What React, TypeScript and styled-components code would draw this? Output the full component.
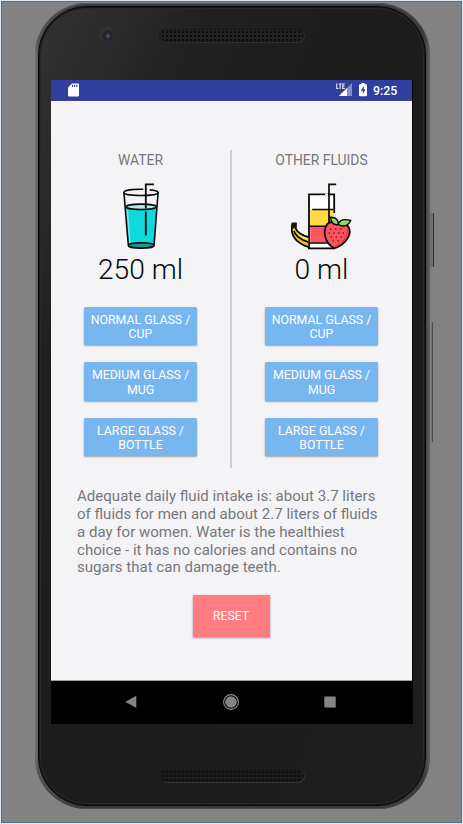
import React from "react";
import styled, { createGlobalStyle } from "styled-components";

const GlobalStyle = createGlobalStyle`
  * { box-sizing: border-box; }
  body {
    margin: 0;
    background: #dfeaf5;
    font-family: Roboto, "Liberation Sans", sans-serif;
    -webkit-font-smoothing: antialiased;
  }
`;

const Desktop = styled.div`
  width: 463px;
  height: 824px;
  padding: 1px;
  background: #dbe8f3;
  overflow: hidden;
`;

const EmulatorWindow = styled.div`
  height: 822px;
  border: 1px solid #54718c;
  background: #828282;
  padding: 1px 0 0 33px;
`;

const PhoneRim = styled.div`
  position: relative;
  width: 395px;
  height: 806px;
  padding: 3px 4px 3px 3px;
  border-radius: 52px;
  background: linear-gradient(90deg, #7b7b7b 0, #555 3px, #3c3a3b 40px, #3b393a 388px, #454243 391px, #676465 395px);
  box-shadow: inset 0 1px 1px #5b5b5b, inset 0 -1px 1px #4a4748;
`;

const PhoneBody = styled.div`
  height: 800px;
  border: 1px solid #080808;
  box-shadow: inset 0 0 0 1px #181818, inset 0 0 0 2px #292929;
  border-radius: 49px;
  background: linear-gradient(115deg, #333 0, #2b2b2b 11%, #202020 23%, #1c1c1d 45%, #1e1e1f 100%);
  display: flex;
  flex-direction: column;
  align-items: flex-start;
  padding-left: 12px;
`;

const SideKey = styled.div<{ $top: number; $height: number; $power?: boolean }>`
  position: absolute;
  left: ${(p) => (p.$power ? 395 : 396)}px;
  top: ${(p) => p.$top}px;
  width: ${(p) => (p.$power ? 4 : 2)}px;
  height: ${(p) => p.$height}px;
  background: ${(p) => (p.$power ? "linear-gradient(90deg,#726d70 3px,#373536 3px)" : "linear-gradient(90deg,#757575 1px,#4c4a4b 1px)")};
`;

const TopBezel = styled.div`
  height: 73px;
  flex: none;
  display: flex;
  padding: 22px 0 0 49px;
`;

const Camera = styled.div`
  width: 15px;
  height: 15px;
  margin: -2px 1px 0 -1px;
  border-radius: 50%;
  background: radial-gradient(circle at 9px 9px, #94859a 0, #493b4c 1.2px, #211d26 4px, #292929 5px, #333 7px);
`;

const Speaker = styled.div<{ $bottom?: boolean }>`
  width: 145px;
  height: 13px;
  flex: none;
  margin: ${(p) => (p.$bottom ? "45px 0 0 108px" : "0 0 0 44px")};
  border-radius: 7px;
  background-color: ${(p) => (p.$bottom ? "#1c1c1c" : "#222")};
  background-image: radial-gradient(circle, #0d0d0d 0.8px, transparent 1.3px);
  background-size: 4px 4px;
  background-position: 1px 0;
  border: 1px solid #191919;
  box-shadow: 1px 1px 0 ${(p) => (p.$bottom ? "#333" : "#2d2d2d")};
`;

const Screen = styled.div`
  width: 362px;
  height: 644px;
  flex: none;
  background: #000;
`;

const StatusBar = styled.header`
  width: 361px;
  height: 21px;
  background: #303f9f;
  border-bottom: 1px solid #3b488e;
  display: flex;
  align-items: center;
  padding: 0 14px 0 17px;
  color: #fff;
`;

const StatusIcons = styled.div`
  margin-left: auto;
  display: flex;
  align-items: center;
  gap: 7px;
`;

const Clock = styled.span`
  margin-left: -1px;
  width: 25px;
  padding-top: 2px;
  font-size: 12.3px;
  line-height: 18px;
  font-weight: 500;
  letter-spacing: 0.05px;
`;

const AppPage = styled.main`
  width: 361px;
  height: 580px;
  background: #f4f4f7;
  border-bottom: 1px solid #9aa4a6;
  padding-top: 49px;
  display: flex;
  flex-direction: column;
`;

const Columns = styled.section`
  display: grid;
  grid-template-columns: 179px 2px 179px;
  height: 318px;
`;

const Divider = styled.div`
  background: #cfcfd1;
`;

const FluidColumn = styled.div`
  display: flex;
  flex-direction: column;
  align-items: center;
`;

const FluidTitle = styled.h2`
  margin: 0;
  height: 32px;
  font-size: 13.9px;
  font-weight: 400;
  line-height: 20px;
  color: #77777a;
  white-space: nowrap;
`;

const Amount = styled.div`
  height: 40px;
  margin-top: 1px;
  font-size: 28.2px;
  font-weight: 300;
  line-height: 38px;
  color: #080808;
  white-space: nowrap;
`;

const ServingList = styled.div`
  display: grid;
  gap: 17px;
  margin-top: 16px;
`;

const ServingButton = styled.button`
  width: 113px;
  height: 38.4px;
  padding: 2px 0 0;
  border: 0;
  border-radius: 1.5px;
  background: #77b6ef;
  box-shadow: 0 1px 2px rgba(0, 0, 0, 0.35);
  color: #fff;
  font: 400 12.35px/14.3px Roboto, sans-serif;
  white-space: pre-line;
`;

const Advice = styled.p`
  margin: 20px 0 0 26px;
  color: #77777a;
  font-size: 15.05px;
  line-height: 17.85px;
  white-space: pre;
`;

const ResetButton = styled.button`
  width: 77px;
  height: 42px;
  margin: 17.5px 0 0 141.5px;
  padding: 1px 0 0;
  border: 0;
  background: #ff7d80;
  box-shadow: 0 1px 2px rgba(0, 0, 0, 0.38);
  color: #fff;
  font: 400 12.3px/16px Roboto, sans-serif;
`;

const NavBar = styled.nav`
  height: 43px;
  display: grid;
  grid-template-columns: 14px 18px 12px;
  align-items: center;
  padding: 0 0 2px 73px;
  column-gap: 84px;
`;

const SdCardIcon = () => (
  <svg width="11" height="14" viewBox="0 0 11 14">
    <path d="M4 .5h6q1 0 1 1v11q0 1-1 1H1q-1 0-1-1V4.5z" fill="#fff" />
    <path d="M4.6 1.8v2.2M6.7 1.8v2.2M8.8 1.8v2.2" stroke="#303f9f" strokeWidth="1.1" />
  </svg>
);

const SignalIcon = () => (
  <svg width="16" height="14" viewBox="0 0 16 14">
    <path d="M16 0v13H3z" fill="#8690c7" />
    <path d="M11 5v8H3z" fill="#fff" />
    <path d="M0 0h9.5v6.5H0z" fill="#303f9f" />
    <path d="M.7 .5v5h1.8M2.7 1h3M4.2 1v5M8.8 1H6.8v4.5h2M6.8 3.2h1.8" fill="none" stroke="#e8eafa" strokeWidth="1.1" />
  </svg>
);

const BatteryIcon = () => (
  <svg width="8" height="14" viewBox="0 0 8 14">
    <path d="M2.3 0h3.4v1.3H7q1 0 1 1v10q0 1-1 1H1q-1 0-1-1v-10q0-1 1-1h1.3z" fill="#fff" />
    <path d="M4.8 3L1.8 7.7h2v3.3l2.7-4.7H4.8z" fill="#303f9f" />
  </svg>
);

const WaterIcon = () => (
  <svg width="62" height="68" viewBox="0 0 62 68" fill="none" stroke="#080808" strokeWidth="1.6">
    <path d="M16.1 25.5l2.6 38q12.2 4.4 25.2 0l2.5-38q-15 4-30.3 0z" fill="#10d9dc" stroke="none" />
    <path d="M17.3 28l2.5 33.5" stroke="#74edeb" strokeWidth="1.5" />
    <ellipse cx="31.2" cy="24.8" rx="15" ry="2.7" fill="#a9eee7" />
    <ellipse cx="31.2" cy="63.4" rx="13" ry="2.7" fill="#15979d" />
    <path d="M18.3 62.8l-4.4-52.5M44.1 62.8l4-52.5" />
    <path d="M33.3 7.3C22 7 14 8.2 13.9 10.4c.1 4.1 34.2 4.1 34.2 0 0-1.4-3.2-2.1-8.4-2.5" />
    <path d="M44 2.4h-8.2v24M35.8 29.5v24" strokeWidth="1.8" />
  </svg>
);

const JuiceIcon = () => (
  <svg width="62" height="68" viewBox="0 0 62 68" fill="none" stroke="#080808" strokeWidth="1.8">
    <g transform="translate(-.8 0)">
      <path d="M18.8 12.4H44v54H18.8z" fill="#fff" />
      <path d="M20 27.5h23v16.7H20z" fill="#ffda42" stroke="none" />
      <path d="M20 44.7h23v15.8H20z" fill="#ff535e" stroke="none" />
      <path d="M22 27.5h21M19 44.3h20M19 61h20" strokeWidth="1.5" />
      <path d="M34.8 12.4h3M44 31v6" stroke="#f4f4f7" strokeWidth="2" />
      <path d="M46 2.4h-7.2V43" strokeWidth="1.7" />
      <path d="M2 41.5h3.6v5.2c1.7 4.1 5.2 7.2 12.3 9.5v9C8.8 62.1 2 57.2 1.5 47.5z" fill="#f1bd20" stroke="none" />
      <path d="M6 48l12 7.2v4C12.6 58.3 7.4 54 4 49z" fill="#ffdc4e" stroke="none" />
      <path d="M2 41.5h3.6v5.2c1.7 4 5.5 6.5 12.5 8.5M18 60C9.5 57.5 4.5 52.5 3.8 49M2 41.5l-.5 6C2 57.2 8.8 62 18.7 65.2" />
      <path d="M1.5 41h4.7v4L1.5 47z" fill="#151515" stroke="none" />
      <path d="M37 42c-5.7 9.2-1.1 20.1 7.2 24.2C52 64.5 61.5 55.2 59.2 46.9c-1.6-5.6-8.7-6.2-11.3-4.8-2.2-1.8-7.6-3.5-10.9-.1z" fill="#ff535e" />
      <path d="M57.4 47c.6 7-4.3 14.2-12.2 17.3" stroke="#d83848" strokeWidth="1.4" />
      <path d="M40.5 47h.1M45.5 47h.1M50.5 47h.1M39 51h.1M43.8 51h.1M48.6 51h.1M53 51h.1M41 55h.1M46 55h.1M51 55h.1M43 59h.1M48 59h.1" stroke="#431316" strokeWidth="1.5" strokeLinecap="round" />
      <path d="M48 42.5c-5.6 1.2-7.5-3.5-7.6-7.3 5.7.1 8.1 3.1 7.6 7.3zm0 0c1.6-5.4 7.2-5.5 12.5-4-1.6 4-5.8 7.5-12.5 4z" fill="#8bdd63" strokeWidth="1.4" />
    </g>
  </svg>
);

const BackIcon = () => (
  <svg width="14" height="16" viewBox="0 0 14 16">
    <path d="M2 7.5L11.8 2.1q.5-.2.5.4V13.2q0 .5-.5.3L2 8.3q-.5-.4 0-.8z" fill="#858585" />
  </svg>
);

const HomeIcon = () => (
  <svg width="18" height="18" viewBox="0 0 18 18">
    <circle cx="9" cy="9" r="7.4" fill="none" stroke="#909090" strokeWidth="1.1" />
    <circle cx="9" cy="9" r="5.8" fill="#858585" />
  </svg>
);

const OverviewIcon = () => (
  <svg width="12" height="12" viewBox="0 0 12 12">
    <rect x=".3" y=".4" width="11.4" height="11.2" rx=".5" fill="#858585" />
  </svg>
);

const servings = ["NORMAL GLASS /\nCUP", "MEDIUM GLASS /\nMUG", "LARGE GLASS /\nBOTTLE"];

const adviceText = `Adequate daily fluid intake is: about 3.7 liters
of fluids for men and about 2.7 liters of fluids
a day for women. Water is the healthiest
choice - it has no calories and contains no
sugars that can damage teeth.`;

function Fluid({ title, amount, children }: { title: string; amount: string; children: React.ReactNode }) {
  return (
    <FluidColumn>
      <FluidTitle>{title}</FluidTitle>
      {children}
      <Amount>{amount}</Amount>
      <ServingList>
        {servings.map((serving) => <ServingButton key={serving}>{serving}</ServingButton>)}
      </ServingList>
    </FluidColumn>
  );
}

export default function App() {
  return (
    <Desktop>
      <GlobalStyle />
      <EmulatorWindow>
        <PhoneRim>
          <PhoneBody>
            <TopBezel>
              <Camera />
              <Speaker />
            </TopBezel>
            <Screen>
              <StatusBar>
                <SdCardIcon />
                <StatusIcons>
                  <SignalIcon />
                  <BatteryIcon />
                  <Clock>9:25</Clock>
                </StatusIcons>
              </StatusBar>
              <AppPage>
                <Columns>
                  <Fluid title="WATER" amount="250 ml"><WaterIcon /></Fluid>
                  <Divider />
                  <Fluid title="OTHER FLUIDS" amount="0 ml"><JuiceIcon /></Fluid>
                </Columns>
                <Advice>{adviceText}</Advice>
                <ResetButton>RESET</ResetButton>
              </AppPage>
              <NavBar>
                <BackIcon />
                <HomeIcon />
                <OverviewIcon />
              </NavBar>
            </Screen>
            <Speaker $bottom />
          </PhoneBody>
          <SideKey $power $top={210} $height={54} />
          <SideKey $top={319} $height={120} />
        </PhoneRim>
      </EmulatorWindow>
    </Desktop>
  );
}
